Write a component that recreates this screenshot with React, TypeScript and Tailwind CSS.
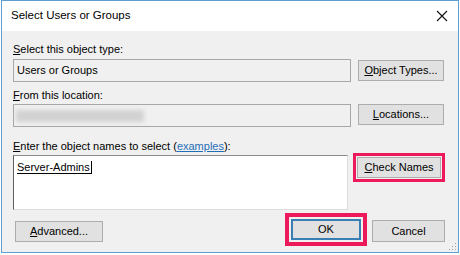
const btn =
  "h-[21px] bg-[#e1e1e1] border border-[#adadad] flex items-center justify-center text-[11px] text-black";

const U = ({ children }: { children: string }) => <span className="underline underline-offset-1">{children}</span>;

export default function App() {
  return (
    <div className="w-[460px] h-[255px] bg-white font-['Liberation_Sans',Arial,sans-serif] text-[11px] text-black">
      <div className="ml-[1px] w-[458px] h-[253px] border border-[#5d9fd3] flex flex-col">
        {/* title bar */}
        <div className="h-[30px] bg-white flex items-center justify-between pl-[9px] pr-[9px]">
          <span className="text-[11.5px] leading-none">Select Users or Groups</span>
          <svg width="12" height="12" viewBox="0 0 12 12" className="mr-[1px]">
            <path d="M1 1 L11 11 M11 1 L1 11" stroke="#111" strokeWidth="1.1" />
          </svg>
        </div>

        <div className="flex-1 bg-[#f0f0f0] pl-[11px] pr-[13px] relative">
          <div className="mt-[11px] leading-[14px]">
            <U>S</U>elect this object type:
          </div>
          <div className="mt-[3px] flex items-start">
            <div className="w-[338px] h-[23px] border border-[#a7a7a7] bg-[#f0f0f0] flex items-center pl-[3px]">
              Users or Groups
            </div>
            <div className={`${btn} w-[86px] ml-[7px] mt-[1px]`}>
              <span><U>O</U>bject Types...</span>
            </div>
          </div>

          <div className="mt-[6px] leading-[14px]">
            <U>F</U>rom this location:
          </div>
          <div className="mt-[2px] flex items-start">
            <div className="w-[338px] h-[23px] border border-[#a7a7a7] bg-[#f0f0f0] flex items-center pl-[2px]">
              <div className="w-[128px] h-[12px] bg-[#d2d2d2] blur-[2px]" />
            </div>
            <div className={`${btn} w-[86px] ml-[7px]`}>
              <span><U>L</U>ocations...</span>
            </div>
          </div>

          <div className="mt-[12px] leading-[14px]">
            <U>E</U>nter the object names to select (
            <span className="text-[#1f6fb8] underline underline-offset-1">examples</span>):
          </div>
          <div className="mt-[2px] flex items-start">
            <div className="w-[338px] h-[55px] bg-white border-t border-l border-t-[#8c8c8c] border-l-[#5f5f5f] border-r border-b border-r-[#dcdcdc] border-b-[#dcdcdc] pl-[3px] pt-[3px]">
              <span className="border-b border-black border-r pr-[1px] leading-[12px] inline-block">Server-Admins</span>
            </div>
            <div className="ml-[5px] -mt-[2px] border-[3px] border-[#ec1a5a] p-[1px]">
              <div className={`${btn} w-[84px] h-[20px]`}>
                <span><U>C</U>heck Names</span>
              </div>
            </div>
          </div>

          <div className="mt-[3px] flex items-start">
            <div className={`${btn} w-[88px] ml-[2px] mt-[8px]`}>
              <span><U>A</U>dvanced...</span>
            </div>
            <div className="ml-auto flex items-start">
              <div className="border-[4px] border-[#ec1a5a] p-[2px]">
                <div className="w-[70px] h-[21px] bg-[#e1e1e1] border-2 border-[#3a7fb3] flex items-center justify-center">
                  OK
                </div>
              </div>
              <div className={`${btn} w-[73px] ml-[5px] mt-[7px] h-[22px]`}>Cancel</div>
            </div>
          </div>

          {/* resize grip */}
          <svg width="8" height="8" viewBox="0 0 8 8" className="absolute right-[1px] bottom-[1px]">
            <rect x="6" y="0" width="1" height="1" fill="#a0a0a0" />
            <rect x="3" y="3" width="1" height="1" fill="#a0a0a0" />
            <rect x="6" y="3" width="1" height="1" fill="#a0a0a0" />
            <rect x="0" y="6" width="1" height="1" fill="#a0a0a0" />
            <rect x="3" y="6" width="1" height="1" fill="#a0a0a0" />
            <rect x="6" y="6" width="1" height="1" fill="#a0a0a0" />
          </svg>
        </div>
      </div>
    </div>
  );
}
